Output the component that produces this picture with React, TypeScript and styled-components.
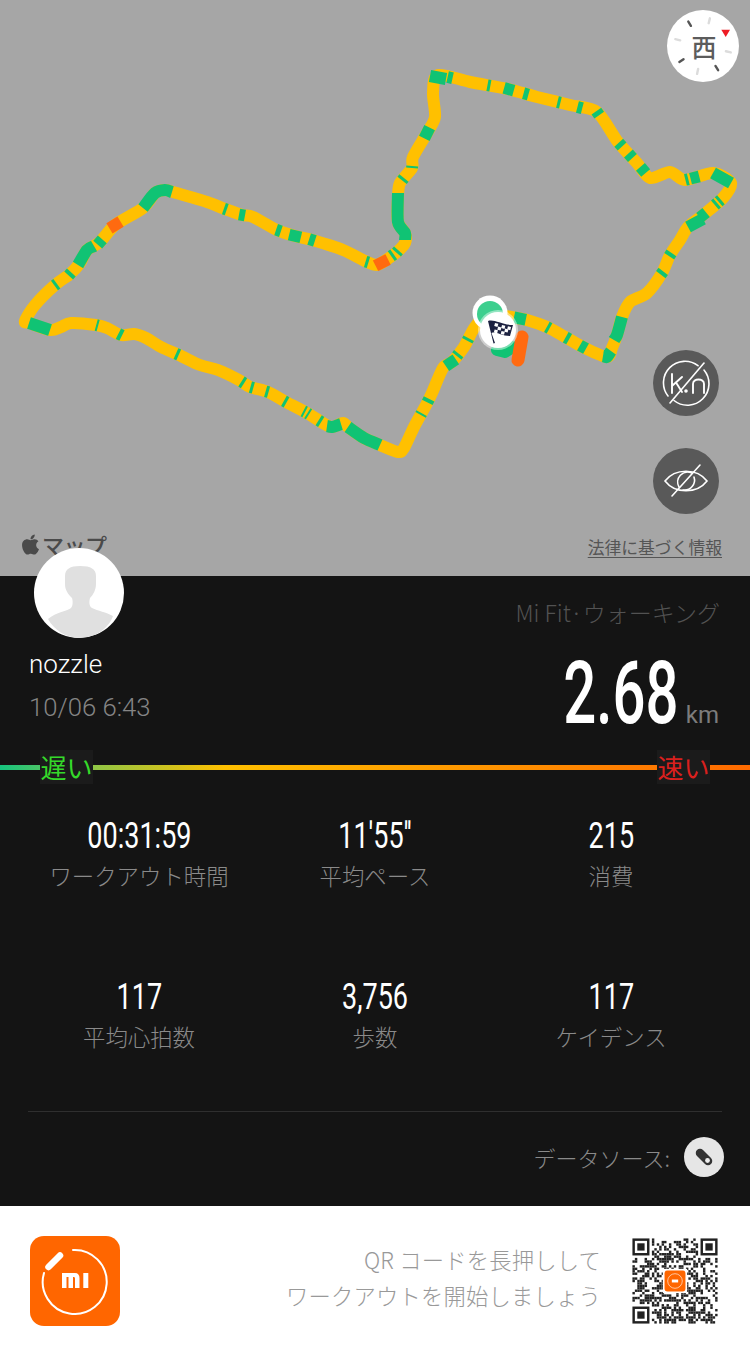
import React from "react";
import styled, { createGlobalStyle } from "styled-components";
import { FaApple } from "react-icons/fa";

const Global = createGlobalStyle`
  html, body { margin: 0; padding: 0; background: #fff; }
  body { font-family: "Liberation Sans", "Noto Sans CJK JP", sans-serif; }
`;

const Page = styled.div`
  width: 750px;
  height: 1356px;
  display: flex;
  flex-direction: column;
  overflow: hidden;
`;

const MapArea = styled.section`
  position: relative;
  height: 576px;
  flex: none;
  background: #a6a6a6;
  overflow: hidden;
`;
const RouteCanvas = styled.svg`
  display: block;
  width: 750px;
  height: 576px;
`;
const Compass = styled.svg`
  position: absolute;
  top: 10px;
  right: 11px;
  width: 72px;
  height: 72px;
`;
const CompassGlyph = styled.span`
  position: absolute;
  top: 31px;
  right: 31px;
  width: 30px;
  text-align: center;
  font: 500 25px/30px "Noto Sans CJK SC", sans-serif;
  color: #5c5c5c;
`;
const RoundButton = styled.div<{ $top: number }>`
  position: absolute;
  top: ${(p) => p.$top}px;
  left: 653px;
  width: 66px;
  height: 66px;
  border-radius: 50%;
  background: #595959;
  display: flex;
  align-items: center;
  justify-content: center;
`;
const AppleMaps = styled.div`
  position: absolute;
  left: 19px;
  top: 529px;
  display: flex;
  align-items: center;
  gap: 0;
  color: #4a4a4a;
  font: 500 22px/30px "Noto Sans CJK JP", sans-serif;
  letter-spacing: -0.5px;
`;
const Legal = styled.a`
  position: absolute;
  right: 28px;
  top: 535px;
  font: 400 16.8px/24px "Noto Sans CJK JP", sans-serif;
  color: #555;
  text-decoration: underline;
  text-underline-offset: 3px;
`;

const Panel = styled.section`
  position: relative;
  height: 630px;
  flex: none;
  background: #141414;
  display: flex;
  flex-direction: column;
`;
const Avatar = styled.div`
  position: absolute;
  left: 34px;
  top: -28px;
  width: 90px;
  height: 90px;
  border-radius: 50%;
  background: #fff;
  overflow: hidden;
`;
const Header = styled.header`
  height: 174px;
  flex: none;
  display: flex;
  justify-content: space-between;
  padding: 0 30px 0 29px;
`;
const Person = styled.div`
  padding-top: 70px;
  display: flex;
  flex-direction: column;
  gap: 9px;
`;
const Name = styled.div`
  font: 300 26px/36px Roboto, sans-serif;
  color: #fff;
`;
const When = styled.div`
  font: 300 25.7px/32px Roboto, sans-serif;
  color: #858585;
`;
const Summary = styled.div`
  display: flex;
  flex-direction: column;
  align-items: flex-end;
  padding-top: 20px;
`;
const Title = styled.div`
  font: 300 23px/32px "Noto Sans CJK JP", sans-serif;
  color: #525252;
`;
const Distance = styled.div`
  display: flex;
  align-items: baseline;
  margin-top: 15px;
  height: 100px;
`;
const DistanceValue = styled.span`
  display: inline-block;
  font: 500 88px/100px Roboto, sans-serif;
  color: #fff;
  transform: scaleX(0.66);
  transform-origin: right center;
  margin-right: 7px;
`;
const Unit = styled.span`
  font: 400 24px/26px Roboto, sans-serif;
  color: #7c7c7c;
  margin-right: 1px;
`;
const SpeedBar = styled.div`
  height: 34px;
  flex: none;
  display: flex;
  justify-content: space-between;
  padding: 0 40px;
  background: linear-gradient(
      90deg,
      #16c47f 0%,
      #93c644 13%,
      #ffc000 30%,
      #ff9a00 60%,
      #ff6a00 100%
    )
    center / 100% 5px no-repeat;
`;
const SpeedLabel = styled.span<{ $color: string }>`
  width: 53px;
  background: #1b1b1b;
  color: ${(p) => p.$color};
  font: 400 26px/34px "Noto Sans CJK JP", sans-serif;
  text-align: center;
  white-space: nowrap;
`;
const Stats = styled.div`
  margin-top: 30px;
  padding: 0 21px;
  display: grid;
  grid-template-columns: repeat(3, 1fr);
  grid-auto-rows: 161px;
  height: 297px;
  flex: none;
`;
const Stat = styled.div`
  display: flex;
  flex-direction: column;
  align-items: center;
`;
const StatValue = styled.span`
  display: inline-block;
  font: 400 36px/44px Roboto, sans-serif;
  color: #fff;
  transform: scaleX(0.75);
  white-space: nowrap;
`;
const StatLabel = styled.span`
  font: 300 22.4px/32px "Noto Sans CJK JP", sans-serif;
  color: #8a8a8a;
  margin-top: 1px;
`;
const Divider = styled.hr`
  margin: 0 28px;
  border: 0;
  height: 1px;
  background: #2f2f2f;
  flex: none;
`;
const Source = styled.div`
  margin-top: 25px;
  padding-right: 26px;
  display: flex;
  justify-content: flex-end;
  align-items: center;
  gap: 14px;
  font: 300 22px/40px "Noto Sans CJK JP", sans-serif;
  color: #8a8a8a;
`;
const SourceIcon = styled.div`
  width: 40px;
  height: 40px;
  border-radius: 50%;
  background: #e6e6e6;
  display: flex;
  align-items: center;
  justify-content: center;
`;

const Footer = styled.footer`
  height: 150px;
  flex: none;
  background: #fff;
  display: flex;
  align-items: center;
  padding: 0 30px;
  box-sizing: border-box;
`;
const Promo = styled.div`
  flex: 1;
  text-align: right;
  padding-right: 29px;
  margin-bottom: 8px;
  font: 300 22.3px/36px "Noto Sans CJK JP", sans-serif;
  color: #999;
  letter-spacing: 0.2px;
`;

type P = [number, number];
const route: P[] = [
  [505, 316], [517, 318], [527, 320], [547, 327], [567, 338], [583, 347], [607, 357], [612, 348], [617, 335], [622, 317], [630, 302],
  [647, 293], [662, 273], [670, 255], [680, 240], [688, 227], [703, 215], [723, 198], [731, 183], [713, 173], [685, 180],
  [670, 172], [650, 178], [637, 163], [618, 142], [597, 112], [570, 105], [537, 97], [508, 89], [470, 82], [438, 75],
  [433, 93], [435, 117], [427, 133], [413, 157], [412, 168], [400, 183], [398, 197], [398, 222], [405, 233], [405, 243],
  [397, 252], [383, 262], [377, 265], [367, 262], [343, 250], [312, 240], [295, 236], [277, 230], [253, 217], [242, 215],
  [225, 209], [207, 202], [173, 192], [165, 190], [155, 193], [143, 208], [115, 225], [100, 242], [87, 250], [80, 263],
  [70, 274], [55, 285], [35, 305], [25, 321], [29, 323], [50, 330], [61, 327], [71, 323], [96, 325], [107, 328],
  [121, 335], [134, 334], [146, 338], [161, 347], [179, 355], [200, 365], [218, 370], [239, 380], [250, 387], [268, 392],
  [286, 402], [307, 413], [323, 423], [332, 427], [343, 423], [348, 427], [364, 438], [380, 445], [398, 452], [404, 448],
  [414, 427], [425, 407], [432, 393], [443, 368], [452, 362], [464, 347], [473, 330], [482, 318],
];

const GREEN = "#10c374";
const ORANGE = "#ff6a10";
const W = 12;

const marks: [number, number, number, string?][] = [
  [56, 285, 3], [70, 274, 4], [100, 242, 7], [115, 225, 13, ORANGE], [225, 210, 3], [242, 215, 6], [278, 232, 5],
  [295, 236, 12], [312, 240, 6], [367, 262, 3], [382, 263, 14, ORANGE], [398, 252, 3], [393, 256, 3],
  [97, 326, 2], [121, 333, 4], [177, 355, 3], [243, 382, 3], [252, 387, 3], [267, 392, 3], [285, 402, 3],
  [304, 412, 2], [308, 414, 2], [320, 421, 3], [421, 414, 2], [429, 401, 4], [451, 363, 12], [458, 355, 3],
  [469, 340, 3], [520, 318, 12], [548, 328, 3], [567, 339, 4], [583, 347, 7], [662, 273, 4], [671, 255, 4],
  [703, 215, 8], [716, 204, 3], [720, 201, 3], [695, 178, 9], [687, 180, 3], [643, 170, 8], [629, 157, 6],
  [620, 145, 5], [598, 113, 5], [580, 107, 5], [559, 102, 3], [526, 94, 5], [509, 89, 10], [489, 85, 3],
  [450, 78, 5], [427, 133, 12], [413, 167, 2], [404, 180, 3],
];
const thick: P[][] = [
  [[29, 323], [50, 330]],
  [[78, 265], [87, 250], [94, 246]],
  [[143, 208], [155, 193], [165, 190], [172, 192]],
  [[327, 426], [332, 427], [341, 424]],
  [[348, 427], [364, 438], [380, 445]],
  [[622, 317], [617, 335], [614, 340]],
  [[603, 356], [607, 357], [611, 351]],
  [[398, 193], [398, 222], [405, 233], [405, 240]],
  [[713, 173], [731, 183]],
  [[688, 227], [703, 219]],
  [[430, 76], [446, 79]],
];

function markLine(x: number, y: number, len: number) {
  let best = Infinity;
  let res: [P, P] = [[x, y], [x, y]];
  for (let i = 0; i < route.length - 1; i++) {
    const [ax, ay] = route[i];
    const [bx, by] = route[i + 1];
    const dx = bx - ax;
    const dy = by - ay;
    const l2 = dx * dx + dy * dy;
    const t = Math.max(0, Math.min(1, ((x - ax) * dx + (y - ay) * dy) / l2));
    const px = ax + t * dx;
    const py = ay + t * dy;
    const d = (px - x) ** 2 + (py - y) ** 2;
    if (d < best) {
      best = d;
      const l = Math.sqrt(l2);
      const ux = (dx / l) * (len / 2);
      const uy = (dy / l) * (len / 2);
      res = [[px - ux, py - uy], [px + ux, py + uy]];
    }
  }
  return res;
}
function smooth(p: P[]) {
  let d = `M${p[0][0]} ${p[0][1]}`;
  for (let i = 0; i < p.length - 1; i++) {
    const a = p[Math.max(0, i - 1)];
    const b = p[i];
    const c = p[i + 1];
    const e = p[Math.min(p.length - 1, i + 2)];
    const k = 0.14;
    d += ` C${(b[0] + (c[0] - a[0]) * k).toFixed(1)} ${(b[1] + (c[1] - a[1]) * k).toFixed(1)} ${(c[0] - (e[0] - b[0]) * k).toFixed(1)} ${(c[1] - (e[1] - b[1]) * k).toFixed(1)} ${c[0]} ${c[1]}`;
  }
  return d;
}

const Route = () => (
  <RouteCanvas viewBox="0 0 750 576">
    <path d={smooth(route)} fill="none" stroke="#ffc000" strokeWidth={W} strokeLinejoin="round" strokeLinecap="round" />
    {thick.map((p, i) => (
      <path key={i} d={smooth(p)} fill="none" stroke={GREEN} strokeWidth={W} strokeLinejoin="round" />
    ))}
    {marks.map(([x, y, l, c], i) => {
      const [a, b] = markLine(x, y, l);
      return <line key={i} x1={a[0]} y1={a[1]} x2={b[0]} y2={b[1]} stroke={c ?? GREEN} strokeWidth={W - 0.2} />;
    })}
    <polyline points="497,350 505,352 513,347" fill="none" stroke={GREEN} strokeWidth={12} strokeLinecap="round" strokeLinejoin="round" />
    <polyline points="522,337 518,360" fill="none" stroke={ORANGE} strokeWidth={13} strokeLinecap="round" />
    <circle cx={490} cy={313} r={17.5} fill="#fff" />
    <circle cx={490} cy={314} r={13} fill="#3ccf8e" />
    <circle cx={498} cy={330} r={20} fill="#fff" fillOpacity={0.45} />
    <circle cx={498} cy={330} r={18} fill="#fff" />
    <g transform="translate(487 320)">
      <path d="M1 1 C8 -1 14 5 26 5 L23 16 C14 16 9 11 4.5 13 L8 23 L6.5 23.5 Z" fill="#1c2140" />
      <g fill="#fff">
        <rect x={8} y={3} width={3.4} height={3.2} transform="rotate(14 8 3)" />
        <rect x={15} y={5} width={3.4} height={3.2} transform="rotate(14 15 5)" />
        <rect x={21} y={6.3} width={3.2} height={3.2} transform="rotate(14 21 6)" />
        <rect x={11} y={6.6} width={3.4} height={3.2} transform="rotate(14 11 7)" />
        <rect x={18} y={8.6} width={3.4} height={3.2} transform="rotate(14 18 9)" />
        <rect x={7.5} y={9.6} width={3.4} height={3.2} transform="rotate(14 8 10)" />
        <rect x={14.5} y={11} width={3.4} height={3.2} transform="rotate(14 15 11)" />
      </g>
    </g>
  </RouteCanvas>
);

const ticks: [number, string][] = [
  [-31, "#555"], [14, "#dcdcdc"], [103, "#dcdcdc"], [148, "#555"], [192, "#dcdcdc"], [236, "#555"], [284, "#dcdcdc"],
];

const CompassIcon = () => (
  <Compass viewBox="0 0 72 72">
    <circle cx={36} cy={36} r={36} fill="#fff" />
    {ticks.map(([a, c], i) => (
      <line key={i} x1={36} y1={7.5} x2={36} y2={12.5} stroke={c} strokeWidth={2.4} strokeLinecap="round" transform={`rotate(${a} 36 36)`} />
    ))}
    <path d="M54.3 19.7 H63 L58.7 27 Z" fill="#ee1c25" />
  </Compass>
);

const KmOff = () => (
  <svg width="48" height="48" viewBox="0 0 48 48" fill="none" stroke="#fff" strokeWidth="1.6" strokeLinecap="round">
    <path d="M36 6.7A21.5 21.5 0 0 0 6 37M12 41.5A21.5 21.5 0 0 0 42 11" />
    <path d="M42 4 L8 44" />
    <path d="M10 15V34M10.5 26.5L20 18M14 23.5L20 33" strokeWidth="1.9" />
    <path d="M31 34V25C31 19 42 19 42 25V34" strokeWidth="1.9" />
    <circle cx="24" cy="32" r="1" fill="#fff" />
  </svg>
);
const EyeOff = () => (
  <svg width="46" height="46" viewBox="0 0 46 46" fill="none" stroke="#fff" strokeWidth="1.6" strokeLinecap="round">
    <path d="M2 23C12 10 34 10 44 23C34 36 12 36 2 23Z" />
    <path d="M16 29A10 10 0 0 1 29 15M31 19A10 10 0 0 1 20 32" />
    <path d="M37 7L9 38" />
  </svg>
);

const Silhouette = () => (
  <svg width="90" height="90" viewBox="0 0 90 90">
    <path
      d="M14 71 C22 64 34 63 37 60 C39 58 39 53 38 50 C34 46 31 42 31 36 L31 28 C31 21 36 18 46 18 C57 18 62 21 62 28 L62 36 C62 42 59 47 56 50 C55 54 55 58 58 60 C64 63 72 64 79 68 C74 82 60 90 46 90 C32 90 20 82 14 71Z"
      fill="#e0e0e0"
    />
  </svg>
);

const MiLogo = () => (
  <svg width="90" height="90" viewBox="0 0 90 90">
    <rect width="90" height="90" rx="14" fill="#ff6600" />
    <path d="M43 14 A32 32 0 1 1 14 37" fill="none" stroke="#fff" strokeWidth="2" strokeLinecap="round" />
    <path d="M18.5 31 L30 19.5" stroke="#fff" strokeWidth="6.5" strokeLinecap="round" />
    <path
      d="M32 37 H45 C48 37 49.5 39 49.5 42 V52 H45 V42.5 C45 41.5 44.5 41 43.5 41 H43 V52 H38.5 V41 H36.5 V52 H32Z M53.3 37 H58.3 V52 H53.3Z"
      fill="#fff"
    />
  </svg>
);

function qrCells() {
  const n = 35;
  const cells: P[] = [];
  let s = 20231006;
  const inFinder = (x: number, y: number) => (x < 8 && y < 8) || (x >= n - 8 && y < 8) || (x < 8 && y >= n - 8);
  for (let y = 0; y < n; y++) {
    for (let x = 0; x < n; x++) {
      s = (s * 1664525 + 1013904223) >>> 0;
      if (inFinder(x, y)) continue;
      if ((s >>> 16) % 100 < 50) cells.push([x, y]);
    }
  }
  return { n, cells };
}
const QR = () => {
  const { n, cells } = qrCells();
  const finders: P[] = [[0, 0], [n - 7, 0], [0, n - 7]];
  return (
    <svg width="90" height="90" viewBox="-1 -1 37 37">
      {cells.map(([x, y], i) => (
        <rect key={i} x={x} y={y} width={1} height={1} fill="#222" />
      ))}
      {finders.map(([x, y], i) => (
        <g key={i}>
          <rect x={x + 0.5} y={y + 0.5} width={6} height={6} fill="none" stroke="#222" />
          <rect x={x + 2} y={y + 2} width={3} height={3} fill="#222" />
        </g>
      ))}
      <rect x={12.5} y={12.5} width={10} height={10} fill="#fff" />
      <rect x={13.2} y={13.2} width={8.6} height={8.6} rx={1.2} fill="#ff6600" />
      <circle cx={17.5} cy={17.5} r={3} fill="none" stroke="#fff" strokeWidth={0.25} />
      <rect x={16.2} y={16.9} width={2.6} height={1.2} fill="#fff" />
    </svg>
  );
};

const stats = [
  ["00:31:59", "ワークアウト時間"],
  ["11'55''", "平均ペース"],
  ["215", "消費"],
  ["117", "平均心拍数"],
  ["3,756", "歩数"],
  ["117", "ケイデンス"],
];

export default function App() {
  return (
    <Page>
      <Global />
      <MapArea>
        <Route />
        <CompassIcon />
        <CompassGlyph>西</CompassGlyph>
        <RoundButton $top={350}>
          <KmOff />
        </RoundButton>
        <RoundButton $top={448}>
          <EyeOff />
        </RoundButton>
        <AppleMaps>
          <FaApple size={23} />
          マップ
        </AppleMaps>
        <Legal>法律に基づく情報</Legal>
      </MapArea>
      <Panel>
        <Avatar>
          <Silhouette />
        </Avatar>
        <Header>
          <Person>
            <Name>nozzle</Name>
            <When>10/06 6:43</When>
          </Person>
          <Summary>
            <Title>Mi Fit·ウォーキング</Title>
            <Distance>
              <DistanceValue>2.68</DistanceValue>
              <Unit>km</Unit>
            </Distance>
          </Summary>
        </Header>
        <SpeedBar>
          <SpeedLabel $color="#35d92a">遅い</SpeedLabel>
          <SpeedLabel $color="#d9201e">速い</SpeedLabel>
        </SpeedBar>
        <Stats>
          {stats.map(([v, l], i) => (
            <Stat key={i}>
              <StatValue>{v}</StatValue>
              <StatLabel>{l}</StatLabel>
            </Stat>
          ))}
        </Stats>
        <Divider />
        <Source>
          データソース:
          <SourceIcon>
            <svg width="24" height="24" viewBox="0 0 24 24">
              <path d="M8 8 L16 16" stroke="#333" strokeWidth="8.5" strokeLinecap="round" />
              <circle cx="15.5" cy="15.5" r="2.4" fill="#eee" />
            </svg>
          </SourceIcon>
        </Source>
      </Panel>
      <Footer>
        <MiLogo />
        <Promo>
          QR コードを長押しして
          <br />
          ワークアウトを開始しましょう
        </Promo>
        <QR />
      </Footer>
    </Page>
  );
}
